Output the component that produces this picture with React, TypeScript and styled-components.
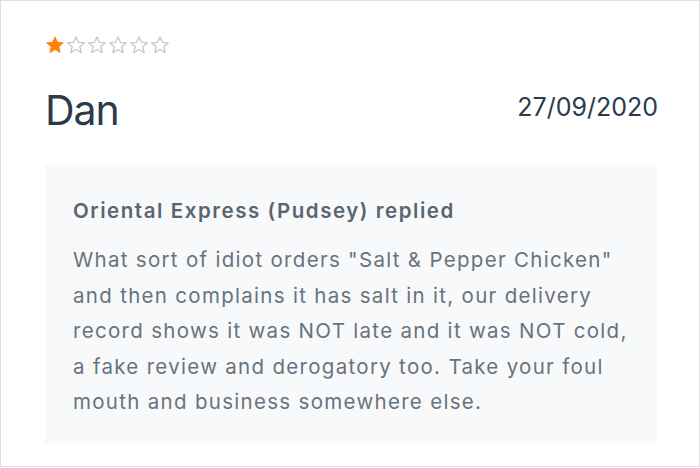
import { createGlobalStyle, styled } from 'styled-components';

const GlobalStyle = createGlobalStyle`
  html, body {
    margin: 0;
    padding: 0;
    background: #ffffff;
  }
  body {
    font-family: Inter, "Noto Sans", sans-serif;
  }
`;

const Card = styled.div`
  box-sizing: border-box;
  width: 700px;
  height: 467px;
  border: 1px solid #dedede;
  padding: 34px 41px 0 44px;
  background: #ffffff;
`;

const Stars = styled.div`
  display: flex;
  align-items: center;
  gap: 1px;
  height: 20px;
`;

const Header = styled.div`
  display: flex;
  justify-content: space-between;
  align-items: flex-start;
  margin-top: 30px;
`;

const Name = styled.div`
  font-size: 41px;
  line-height: 50px;
  letter-spacing: -1px;
  color: #2b3a4d;
`;

const DateText = styled.div`
  font-size: 25px;
  line-height: 30px;
  color: #2b3a4d;
  margin-top: 7px;
`;

const Reply = styled.div`
  margin-top: 30px;
  background: #f8f9fa;
  padding: 33px 14px 24px 28px;
  width: 612px;
  box-sizing: border-box;
`;

const ReplyTitle = styled.div`
  font-size: 20.5px;
  font-weight: 600;
  letter-spacing: 1.55px;
  color: #5a6570;
  line-height: 26px;
`;

const ReplyBody = styled.p`
  margin: 18px 0 0;
  font-size: 20.5px;
  line-height: 35.5px;
  letter-spacing: 1.3px;
  color: #68737d;
`;

function Star({ filled }: { filled: boolean }) {
  return (
    <svg width="20" height="20" viewBox="0 0 24 24">
      <path
        d="M12 2.2l2.9 6.6 7.1.6-5.4 4.7 1.6 7-6.2-3.7-6.2 3.7 1.6-7L2 9.4l7.1-.6z"
        fill={filled ? '#ff8000' : 'none'}
        stroke={filled ? '#ff8000' : '#c8c8c8'}
        strokeWidth={filled ? 1 : 1.6}
        strokeLinejoin="round"
      />
    </svg>
  );
}

export default function App() {
  const rating = 1;
  return (
    <>
      <GlobalStyle />
      <Card>
        <Stars>
          {[0, 1, 2, 3, 4, 5].map((i) => (
            <Star key={i} filled={i < rating} />
          ))}
        </Stars>
        <Header>
          <Name>Dan</Name>
          <DateText>27/09/2020</DateText>
        </Header>
        <Reply>
          <ReplyTitle>Oriental Express (Pudsey) replied</ReplyTitle>
          <ReplyBody>
            What sort of idiot orders "Salt &amp; Pepper Chicken" and then complains it has salt in it, our
            delivery record shows it was NOT late and it was NOT cold, a fake review and derogatory too. Take
            your foul mouth and business somewhere else.
          </ReplyBody>
        </Reply>
      </Card>
    </>
  );
}
